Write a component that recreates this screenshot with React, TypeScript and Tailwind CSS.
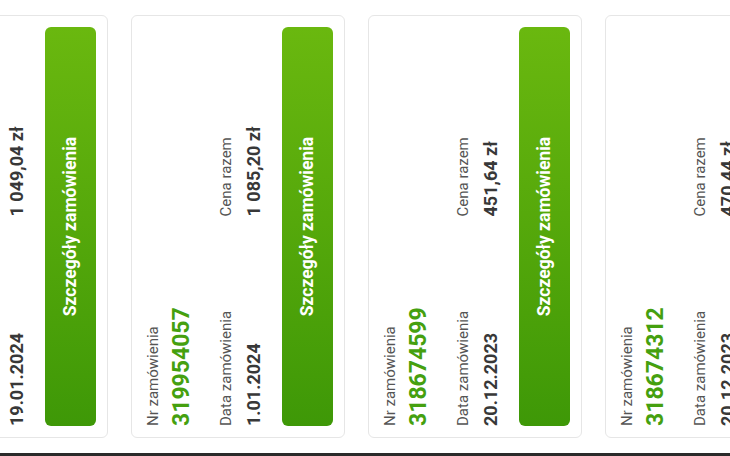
import React from "react";

type Order = { nr: string; date: string; total: string };

const orders: Order[] = [
  { nr: "320514786", date: "19.01.2024", total: "1 049,04 zł" },
  { nr: "319954057", date: "1.01.2024", total: "1 085,20 zł" },
  { nr: "318674599", date: "20.12.2023", total: "451,64 zł" },
  { nr: "318674312", date: "20.12.2023", total: "470,44 zł" },
];

function OrderCard({ o }: { o: Order }) {
  return (
    <div className="shrink-0 rounded-[6px] border border-[#e6e6e6] bg-white px-[11px] pt-[11px] pb-[11px]">
      <div className="text-[15px] leading-5 text-[#555555]">Nr zamówienia</div>
      <div className="mt-[5px] text-[23px] leading-7 font-bold text-[#45a00f]">{o.nr}</div>
      <div className="mt-5 grid grid-cols-2 gap-5">
        <div>
          <div className="text-[15px] leading-5 text-[#555555]">Data zamówienia</div>
          <div className="mt-1.5 text-[18px] leading-6 font-bold text-[#383838]">{o.date}</div>
        </div>
        <div>
          <div className="text-[15px] leading-5 text-[#555555]">Cena razem</div>
          <div className="mt-1.5 text-[18px] leading-6 font-bold text-[#383838]">{o.total}</div>
        </div>
      </div>
      <button className="mt-4 flex h-[51px] w-full items-center justify-center rounded-[6px] bg-linear-to-r from-[#3e9807] to-[#6ab80f] text-[17.5px] font-bold text-white">
        Szczegóły zamówienia
      </button>
    </div>
  );
}

export default function App() {
  return (
    <div className="relative h-[456px] w-[730px] overflow-hidden bg-white" style={{ fontFamily: "Roboto, 'Noto Sans', sans-serif" }}>
      <div className="absolute left-0 top-[456px] flex h-[730px] w-[456px] origin-top-left -rotate-90 flex-row bg-white">
        <div className="h-full w-[3px] shrink-0 bg-[#2a2a2a]" />
        <div className="flex-1 overflow-hidden pl-[15px] pr-[15px]">
          <div className="-mt-[106px] flex flex-col gap-[23px]">
            {orders.map((o) => (
              <OrderCard key={o.nr} o={o} />
            ))}
          </div>
        </div>
      </div>
    </div>
  );
}
